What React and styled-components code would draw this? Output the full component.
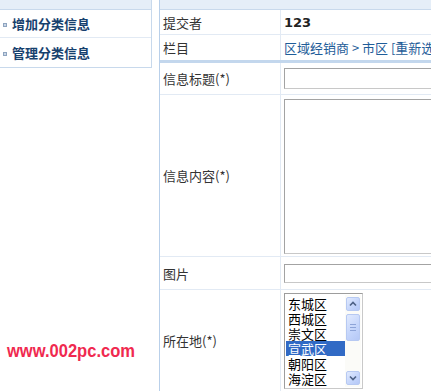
import React from 'react';
import styled, { createGlobalStyle } from 'styled-components';

const GlobalStyle = createGlobalStyle`
  body {
    margin: 0;
    background: #fff;
    overflow: hidden;
    font-family: "Noto Sans CJK SC", "DejaVu Sans", sans-serif;
  }
`;

const Page = styled.div`
  display: flex;
  align-items: flex-start;
  width: 640px;
  height: 391px;
`;

const Sidebar = styled.div`
  flex: none;
  width: 152px;
`;

const Menu = styled.div`
  border-right: 1px solid #c8d9ec;
  border-bottom: 1px solid #c8d9ec;
`;

const Strip = styled.div`
  height: 9px;
  background: #e5eef8;
  border-bottom: 1px solid #c8d9ec;
`;

const MenuItem = styled.div`
  display: flex;
  align-items: center;
  height: ${p => p.$h}px;
  padding-left: 3px;
  border-top: ${p => (p.$first ? 'none' : '1px solid #e2eaf4')};
  font-size: 13px;
  font-weight: bold;
  color: #17416e;
  cursor: pointer;
`;

const Bullet = styled.span`
  width: 2px;
  height: 2px;
  border: 1px solid #8ea4bf;
  background: #c9d6e6;
  margin-right: 5px;
  margin-top: 2px;
`;

const Watermark = styled.div`
  margin-top: 273px;
  padding-left: 8px;
  font-family: "Liberation Sans", Arial, sans-serif;
  font-size: 19px;
  line-height: 20px;
  font-weight: bold;
  color: #f0294f;
  transform: scaleX(0.87);
  transform-origin: left center;
  white-space: nowrap;
`;

const Main = styled.div`
  flex: none;
  width: 470px;
  margin-left: 7px;
  border-left: 1px solid #b9d0ea;
  height: 391px;
`;

const Row = styled.div`
  display: flex;
  height: ${p => p.$h}px;
  border-bottom: ${p => (p.$line ? '1px solid #e2eaf4' : 'none')};
`;

const Label = styled.div`
  flex: none;
  width: 117px;
  padding-left: 3px;
  display: flex;
  align-items: center;
  border-right: 1px solid #e2eaf4;
  font-size: 13px;
  color: #333;
`;

const Value = styled.div`
  flex: 1;
  min-width: 0;
  overflow: hidden;
  display: flex;
  align-items: ${p => (p.$top ? 'flex-start' : 'center')};
  padding-left: 3px;
  padding-top: ${p => p.$pt || 0}px;
  font-size: 13px;
`;

const Band = styled.div`
  height: 3px;
  background: #c3d7ed;
`;

const Submitter = styled.span`
  font-family: "DejaVu Sans", sans-serif;
  font-weight: bold;
  font-size: 13px;
  color: #222;
`;

const Crumb = styled.span`
  color: #1f5d99;
  white-space: nowrap;
`;

const TextInput = styled.div`
  flex: none;
  width: 300px;
  height: ${p => p.$h}px;
  box-sizing: border-box;
  border: 1px solid #a3a3a3;
  border-right-color: #c8c8c8;
  border-bottom-color: #c8c8c8;
  background: #fff;
`;

const ListBox = styled.div`
  display: flex;
  width: 79px;
  height: 96px;
  box-sizing: border-box;
  border: 1px solid #9d9d9d;
  border-right-color: #c9c9c9;
  border-bottom-color: #c9c9c9;
  padding: 1px;
  background: #fff;
`;

const Options = styled.div`
  flex: 1;
  overflow: hidden;
  padding-top: 1px;
`;

const Option = styled.div`
  height: 15px;
  line-height: 15px;
  overflow: hidden;
  padding-left: 2px;
  font-size: 13px;
  color: ${p => (p.$selected ? '#fff' : '#000')};
  background: ${p => (p.$selected ? '#316ac5' : 'transparent')};
  white-space: nowrap;
`;

const Scrollbar = styled.div`
  flex: none;
  width: 16px;
  display: flex;
  flex-direction: column;
  align-items: center;
  padding-top: 2px;
  background: #fbfbf8;
`;

const ScrollButton = styled.div`
  width: 14px;
  height: ${p => p.$h || 14}px;
  margin-top: ${p => p.$mt || 0}px;
  box-sizing: border-box;
  border: 1px solid #b7c9f2;
  border-radius: 2px;
  background: linear-gradient(135deg, #e1eafe 0%, #c3d4fb 60%, #b5c8f6 100%);
  display: flex;
  flex-direction: column;
  align-items: center;
  justify-content: center;
  gap: 2px;
`;

const Grip = styled.div`
  width: 6px;
  height: 1px;
  background: #8da4d8;
`;

const Chevron = ({ down }) => (
  <svg width="8" height="6" viewBox="0 0 8 6">
    <path
      d={down ? 'M1 1.5 L4 4.5 L7 1.5' : 'M1 4.5 L4 1.5 L7 4.5'}
      fill="none"
      stroke="#4d6185"
      strokeWidth="1.6"
    />
  </svg>
);

const districts = ['东城区', '西城区', '崇文区', '宣武区', '朝阳区', '海淀区'];

export default function App() {
  return (
    <>
      <GlobalStyle />
      <Page>
        <Sidebar>
          <Menu>
            <Strip />
            <MenuItem $h={27} $first>
              <Bullet />增加分类信息
            </MenuItem>
            <MenuItem $h={29}>
              <Bullet />管理分类信息
            </MenuItem>
          </Menu>
          <Watermark>www.002pc.com</Watermark>
        </Sidebar>

        <Main>
          <Strip />
          <Row $h={24} $line>
            <Label>提交者</Label>
            <Value><Submitter>123</Submitter></Value>
          </Row>
          <Row $h={25}>
            <Label>栏目</Label>
            <Value><Crumb>区域经销商 &gt; 市区 [重新选择]</Crumb></Value>
          </Row>
          <Band />
          <Row $h={31} $line>
            <Label>信息标题(*)</Label>
            <Value><TextInput $h={21} /></Value>
          </Row>
          <Row $h={161} $line>
            <Label>信息内容(*)</Label>
            <Value $top $pt={4}><TextInput $h={155} /></Value>
          </Row>
          <Row $h={32} $line>
            <Label>图片</Label>
            <Value><TextInput $h={19} /></Value>
          </Row>
          <Row $h={101}>
            <Label>所在地(*)</Label>
            <Value $top $pt={3}>
              <ListBox>
                <Options>
                  {districts.map(d => (
                    <Option key={d} $selected={d === '宣武区'}>{d}</Option>
                  ))}
                </Options>
                <Scrollbar>
                  <ScrollButton><Chevron /></ScrollButton>
                  <ScrollButton $h={27} $mt={3}><Grip /><Grip /><Grip /></ScrollButton>
                  <ScrollButton $mt={30}><Chevron down /></ScrollButton>
                </Scrollbar>
              </ListBox>
            </Value>
          </Row>
        </Main>
      </Page>
    </>
  );
}
